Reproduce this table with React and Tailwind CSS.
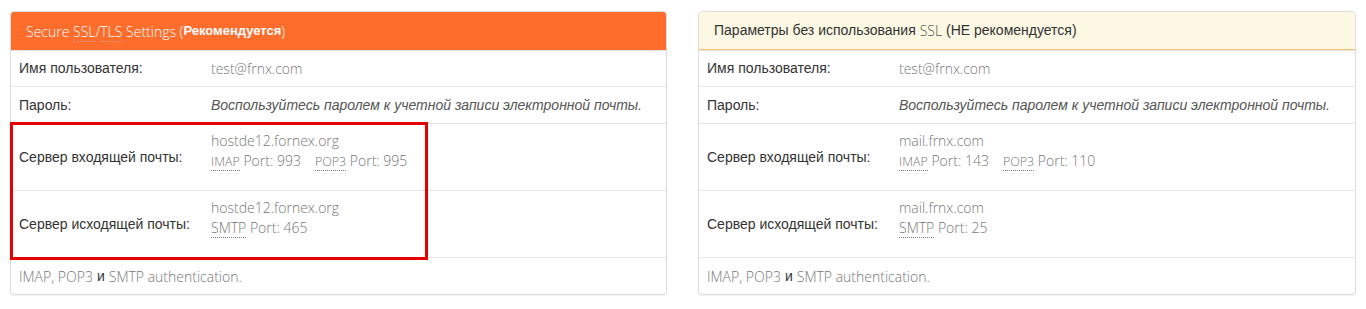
import React from 'react';

const sans = "font-['Liberation_Sans',Arial,sans-serif]";
const light = "font-['Open_Sans',sans-serif] font-light";

function Abbr({ children, small }) {
  return (
    <span className={`border-b border-dotted border-[#777] ${small ? 'text-[12.5px]' : ''}`}>{children}</span>
  );
}

function Row({ label, children, h }) {
  return (
    <div className={`flex items-center border-t border-[#e5e5e5] px-[8px] ${h}`}>
      <div className={`w-[192px] shrink-0 text-[14px] text-[#333] ${sans}`}>{label}</div>
      <div className="flex-1">{children}</div>
    </div>
  );
}

function Value({ children }) {
  return <div className={`text-[14px] leading-[20px] text-[#777] ${light}`}>{children}</div>;
}

function Panel({ header, server, imap, pop3, smtp, highlight }) {
  return (
    <div className="relative flex-1 rounded-[4px] border border-[#ddd] bg-white shadow-[0_1px_1px_rgba(0,0,0,0.05)]">
      {header}
      <Row label="Имя пользователя:" h="h-[36px]">
        <Value>test@frnx.com</Value>
      </Row>
      <Row label="Пароль:" h="h-[37px]">
        <div className={`text-[14px] italic text-[#555] ${sans}`}>
          Воспользуйтесь паролем к учетной записи электронной почты.
        </div>
      </Row>
      <Row label="Сервер входящей почты:" h="h-[67px]">
        <div className="pb-[12px]">
          <Value>{server}</Value>
          <Value>
            <Abbr small>IMAP</Abbr> Port: {imap}
            <span className="ml-[14px]"><Abbr small>POP3</Abbr> Port: {pop3}</span>
          </Value>
        </div>
      </Row>
      <Row label="Сервер исходящей почты:" h="h-[67px]">
        <div className="pb-[12px]">
          <Value>{server}</Value>
          <Value>
            <Abbr>SMTP</Abbr> Port: {smtp}
          </Value>
        </div>
      </Row>
      <div className="flex h-[37px] items-center border-t border-[#e5e5e5] px-[8px]">
        <span className={`text-[14px] text-[#777] ${light}`}>IMAP, POP3 </span>
        <span className={`mx-[4px] text-[14px] text-[#333] ${sans}`}>и</span>
        <span className={`text-[14px] text-[#777] ${light}`}>SMTP authentication.</span>
      </div>
      {highlight && (
        <div className="pointer-events-none absolute left-[-1px] top-[110px] h-[138px] w-[418px] border-[3px] border-[#e60000]" />
      )}
    </div>
  );
}

export default function App() {
  return (
    <div className="flex h-[309px] w-[1366px] gap-[31px] bg-white px-[10px] pt-[11px]">
      <div className="w-[657px]">
        <Panel
          highlight
          server="hostde12.fornex.org"
          imap="993"
          pop3="995"
          smtp="465"
          header={
            <div className="flex h-[38px] items-center rounded-t-[3px] bg-[#ff6d2d] px-[15px] text-white">
              <span className={`text-[14px] ${light}`}>
                Secure <span className="border-b border-dotted border-[#c9a08a]">SSL</span>/<span className="border-b border-dotted border-[#c9a08a]">TLS</span> Settings (
              </span>
              <span className={`text-[13px] font-bold ${sans}`}>Рекомендуется</span>
              <span className={`text-[14px] ${light}`}>)</span>
            </div>
          }
        />
      </div>
      <div className="w-[658px]">
        <Panel
          server="mail.frnx.com"
          imap="143"
          pop3="110"
          smtp="25"
          header={
            <div className="flex h-[38px] items-center rounded-t-[3px] border-b border-[#f5c26b] bg-[#fcf8e3] px-[15px] text-[#333]">
              <span className={`text-[14px] ${sans}`}>Параметры без использования&nbsp;</span>
              <span className={`text-[14px] text-[#555] ${light}`}>SSL</span>
              <span className={`text-[14px] ${sans}`}>&nbsp;(НЕ рекомендуется)</span>
            </div>
          }
        />
      </div>
    </div>
  );
}
